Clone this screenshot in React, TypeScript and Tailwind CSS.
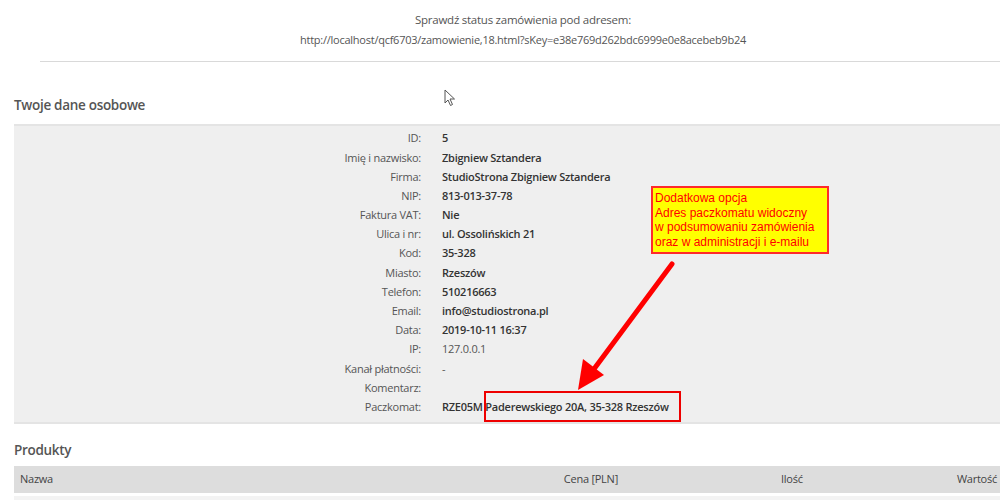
const rows: { label: string; value: string; light?: boolean }[] = [
  { label: 'ID:', value: '5' },
  { label: 'Imię i nazwisko:', value: 'Zbigniew Sztandera' },
  { label: 'Firma:', value: 'StudioStrona Zbigniew Sztandera' },
  { label: 'NIP:', value: '813-013-37-78' },
  { label: 'Faktura VAT:', value: 'Nie' },
  { label: 'Ulica i nr:', value: 'ul. Ossolińskich 21' },
  { label: 'Kod:', value: '35-328' },
  { label: 'Miasto:', value: 'Rzeszów' },
  { label: 'Telefon:', value: '510216663' },
  { label: 'Email:', value: 'info@studiostrona.pl' },
  { label: 'Data:', value: '2019-10-11 16:37' },
  { label: 'IP:', value: '127.0.0.1', light: true },
  { label: 'Kanał płatności:', value: '-', light: true },
  { label: 'Komentarz:', value: '' },
  { label: 'Paczkomat:', value: 'RZE05M Paderewskiego 20A, 35-328 Rzeszów' },
];

const App = () => {
  return (
    <main
      className="relative w-[1000px] h-[500px] overflow-hidden bg-white text-[#444] text-[11px] tracking-[-0.25px]"
      style={{ fontFamily: '"Open Sans", "Liberation Sans", sans-serif' }}
    >
      <div className="pl-[46px] pt-[10px] text-center leading-[20px] text-[#555]">
        <p className="text-[11.5px]">Sprawdź status zamówienia pod adresem:</p>
        <p>http://localhost/qcf6703/zamowienie,18.html?sKey=e38e769d262bdc6999e0e8acebeb9b24</p>
      </div>
      <div className="ml-[40px] mt-[11px] h-px bg-[#d9d9d9]" />

      <h2 className="pl-[14px] mt-[33px] text-[13.5px] tracking-[-0.3px] leading-[20px] font-semibold text-[#555]">
        Twoje dane osobowe
      </h2>

      <section className="ml-[14px] mt-[9px] bg-[#efefef] border-t-2 border-b-2 border-[#e4e4e4] pt-[3px] pb-[5px]">
        {rows.map((r) => (
          <div key={r.label} className="grid grid-cols-[407px_1fr] gap-x-[21px] h-[19.2px] items-center">
            <span className="text-right text-[#555]">{r.label}</span>
            <span className={r.light ? 'text-[#555]' : 'font-semibold text-[#333]'}>{r.value}</span>
          </div>
        ))}
      </section>

      <h2 className="pl-[14px] mt-[16px] text-[13.5px] tracking-[-0.3px] leading-[20px] font-semibold text-[#555]">
        Produkty
      </h2>

      <div className="ml-[14px] mt-[6px] h-[27px] bg-[#dddddd] flex items-center text-[#444]">
        <span className="w-[300px] pl-[6px]">Nazwa</span>
        <span className="w-[304px] text-right">Cena [PLN]</span>
        <span className="pl-[163px]">Ilość</span>
        <span className="flex-1 pr-[3px] text-right">Wartość</span>
      </div>
      <div className="ml-[14px] mt-[3px] h-[20px] bg-[#f3f3f3]" />

      {/* annotation note */}
      <div
        className="absolute left-[651px] top-[186px] w-[178px] h-[68px] bg-[#ffff00] border-2 border-[#ff2a2a] pl-[2px] pt-[3px] text-[12px] tracking-normal leading-[14.5px] text-[#ff0000]"
        style={{ fontFamily: '"Liberation Sans", Arial, sans-serif' }}
      >
        <p>Dodatkowa opcja</p>
        <p>Adres paczkomatu widoczny</p>
        <p>w podsumowaniu zamówienia</p>
        <p>oraz w administracji i e-mailu</p>
      </div>

      <div className="absolute left-[484px] top-[391px] w-[197px] h-[31px] border-[2.5px] border-[#ee0000]" />

      <svg className="absolute left-0 top-0 pointer-events-none" width="1000" height="500">
        <line x1="672" y1="264" x2="594" y2="369" stroke="#ff0000" strokeWidth="5" strokeLinecap="round" />
        <polygon points="578,390 583,359 604,375" fill="#ff0000" />
      </svg>

      {/* mouse cursor */}
      <svg className="absolute left-[444px] top-[89px]" width="12" height="18" viewBox="0 0 12 18">
        <path d="M1 1 L1 14 L4 11 L6.5 16.5 L8.5 15.5 L6 10 L10.5 10 Z" fill="#fff" stroke="#555" strokeWidth="1" strokeLinejoin="round" />
      </svg>
    </main>
  );
};

export default App;
